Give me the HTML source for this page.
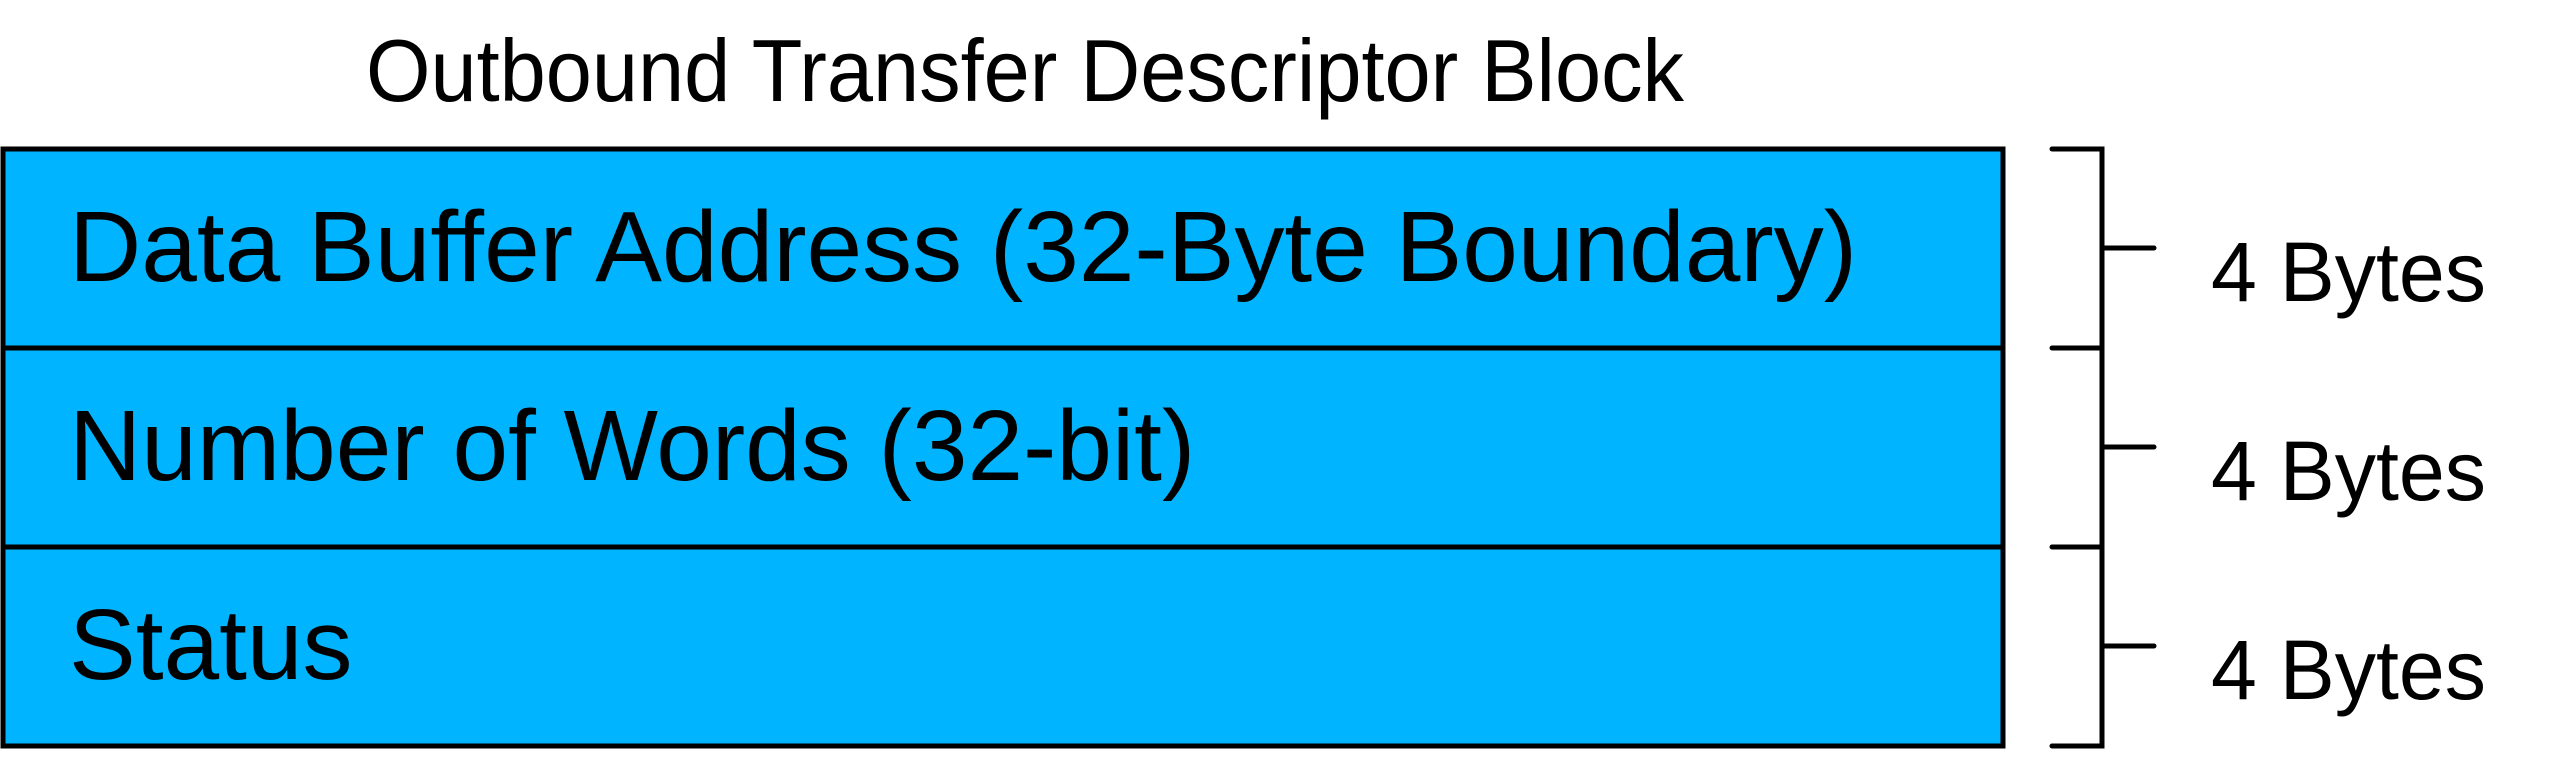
<!DOCTYPE html>
<html><head><style>html,body{margin:0;padding:0;background:#fff;}svg{display:block}</style></head>
<body>
<svg width="2558" height="758" viewBox="0 0 2558 758" xmlns="http://www.w3.org/2000/svg" font-family="Liberation Sans, Arial, sans-serif">
<rect x="3" y="149" width="2000" height="597" fill="#00b4ff" stroke="#000" stroke-width="5"/>
<line x1="3" y1="348" x2="2003" y2="348" stroke="#000" stroke-width="5"/>
<line x1="3" y1="547" x2="2003" y2="547" stroke="#000" stroke-width="5"/>
<g stroke="#000" stroke-width="5" stroke-linecap="round" fill="none">
<polyline points="2052,149 2102,149 2102,746 2052,746"/>
<line x1="2052" y1="348" x2="2102" y2="348"/>
<line x1="2052" y1="547" x2="2102" y2="547"/>
<line x1="2102" y1="248" x2="2154" y2="248"/>
<line x1="2102" y1="447" x2="2154" y2="447"/>
<line x1="2102" y1="646" x2="2154" y2="646"/>
</g>
<text x="366" y="101" font-size="88" fill="#000" textLength="1318" lengthAdjust="spacingAndGlyphs">Outbound Transfer Descriptor Block</text>
<text x="69" y="281" font-size="100" fill="#000">Data Buffer Address (32-Byte Boundary)</text>
<text x="69" y="480" font-size="100" fill="#000">Number of Words (32-bit)</text>
<text x="69" y="679" font-size="100" fill="#000">Status</text>
<text x="2211" y="301" font-size="84" fill="#000" textLength="275" lengthAdjust="spacingAndGlyphs">4 Bytes</text>
<text x="2211" y="500" font-size="84" fill="#000" textLength="275" lengthAdjust="spacingAndGlyphs">4 Bytes</text>
<text x="2211" y="699" font-size="84" fill="#000" textLength="275" lengthAdjust="spacingAndGlyphs">4 Bytes</text>
</svg>
</body></html>
